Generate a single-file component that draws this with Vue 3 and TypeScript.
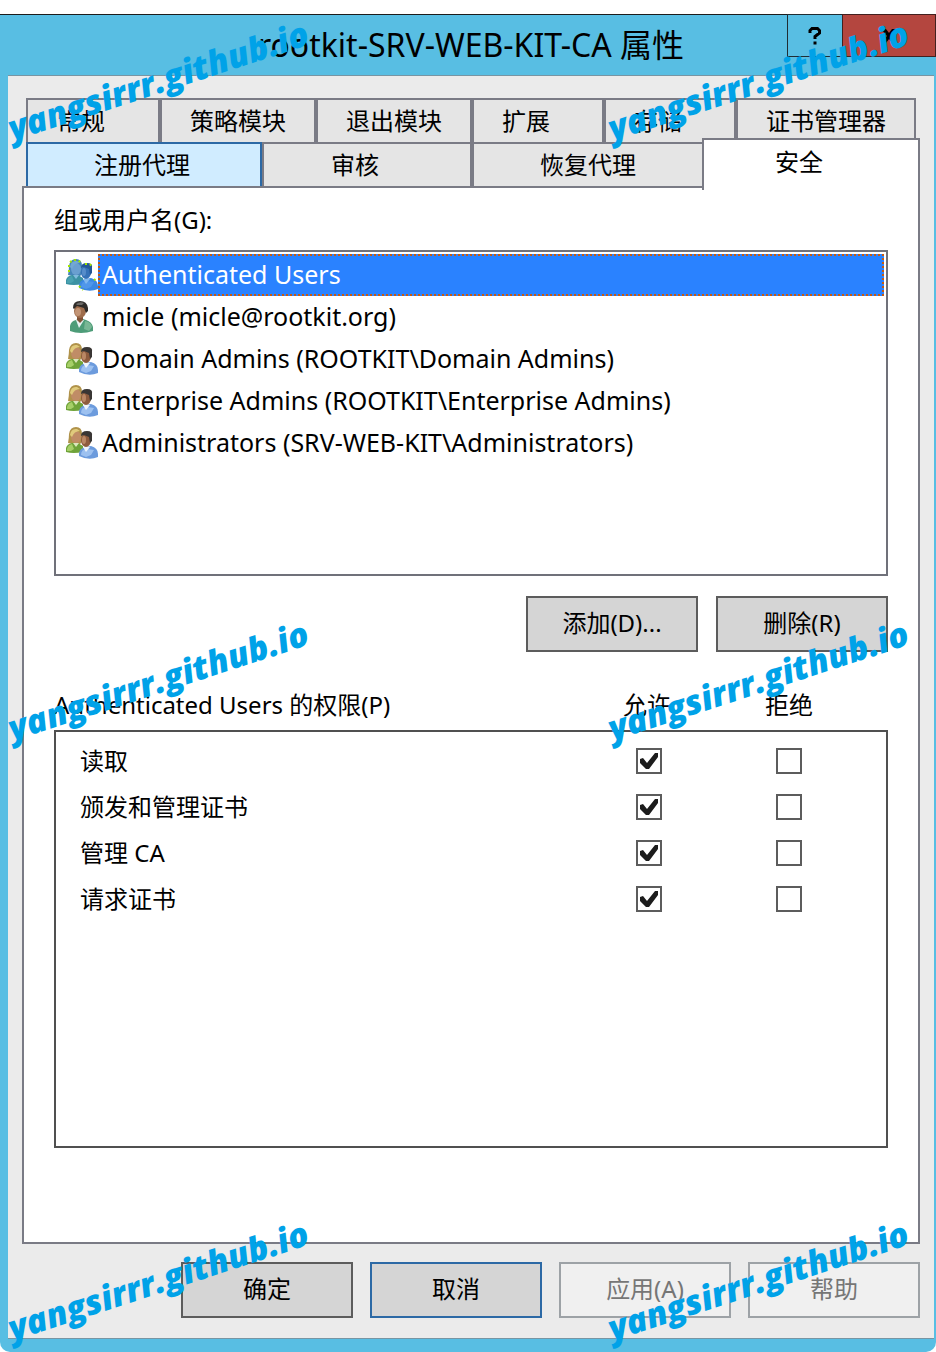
<script setup lang="ts">
import { ref } from 'vue'

interface Tab {
  label: string
  short?: boolean
  state?: 'hot' | 'active'
}

interface Principal {
  name: string
  icon: 'well-known' | 'user' | 'group'
}

interface Permission {
  id: string
  label: string
  allow: boolean
  deny: boolean
}

const tabRows: Tab[][] = [
  [
    { label: '常规', short: true },
    { label: '策略模块' },
    { label: '退出模块' },
    { label: '扩展', short: true },
    { label: '存储', short: true },
    { label: '证书管理器' },
  ],
  [
    { label: '注册代理', state: 'hot' },
    { label: '审核', short: true },
    { label: '恢复代理' },
    { label: '安全', short: true, state: 'active' },
  ],
]

const principals: Principal[] = [
  { name: 'Authenticated Users', icon: 'well-known' },
  { name: 'micle (micle@rootkit.org)', icon: 'user' },
  { name: 'Domain Admins (ROOTKIT\\Domain Admins)', icon: 'group' },
  { name: 'Enterprise Admins (ROOTKIT\\Enterprise Admins)', icon: 'group' },
  { name: 'Administrators (SRV-WEB-KIT\\Administrators)', icon: 'group' },
]

const selected = ref(0)

const permissions = ref<Permission[]>([
  { id: 'read', label: '读取', allow: true, deny: false },
  { id: 'issue', label: '颁发和管理证书', allow: true, deny: false },
  { id: 'manage', label: '管理 CA', allow: true, deny: false },
  { id: 'request', label: '请求证书', allow: true, deny: false },
])
</script>

<template>
  <div class="page">
    <section class="window" role="dialog" aria-labelledby="dialog-title">
      <header class="titlebar">
        <h1 id="dialog-title">rootkit-SRV-WEB-KIT-CA 属性</h1>
        <div class="window-buttons">
          <button type="button" class="help-button" aria-label="帮助">
            <svg width="14" height="18" viewBox="0 0 14 18" fill="none" stroke="#000" stroke-width="3">
              <path d="M2 6V3.5L4 1.5H9.5L11.5 3.5V6L7 9.500V12" />
              <path d="M7 14.500V17.500" />
            </svg>
          </button>
          <button type="button" class="close-button" aria-label="关闭">
            <svg width="16" height="14" viewBox="0 0 16 14" aria-hidden="true">
              <path d="M0 0H5L8 4L11 0H16L10 7L16 14H11L8 10L5 14H0L6 7Z" fill="#000" />
            </svg>
          </button>
        </div>
      </header>

      <div class="body">
        <div class="tabs" role="tablist">
          <div v-for="(row, r) in tabRows" :key="r" class="tab-row" :class="r === 0 ? 'back-row' : 'front-row'">
            <button
              v-for="tab in row"
              :key="tab.label"
              type="button"
              role="tab"
              :aria-selected="tab.state === 'active'"
              class="tab"
              :class="[tab.state, { short: tab.short }]"
            >{{ tab.label }}</button>
          </div>
        </div>

        <div class="pane" role="tabpanel">
          <p id="principals-label" class="caption">组或用户名(G):</p>
          <ul class="principals" role="listbox" aria-labelledby="principals-label">
            <li
              v-for="(p, i) in principals"
              :key="p.name"
              role="option"
              :aria-selected="i === selected"
              class="principal"
              @click="selected = i"
            >
              <svg v-if="p.icon === 'user'" class="icon" viewBox="0 0 32 32" aria-hidden="true">
                <path d="M4 30V25Q5 20 10 19L14 17L20 19Q26 21 27 26V30Q21 32 15 32T4 30Z" fill="#4d9c78" />
                <path d="M19 20Q25 21 26 26L23 30L18 28Z" fill="#79b795" />
                <path d="M10 19L13 27L18 19Z" fill="#e6f2f1" />
                <path d="M11 14H17V19L14 22L11 19Z" fill="#805236" />
                <ellipse cx="14" cy="10" rx="6" ry="7" fill="#9e6c4b" />
                <ellipse cx="12" cy="11" rx="3" ry="4" fill="#c39576" />
                <path d="M7 7Q7 0 14 0T22 7V10L20 12L18 7L11 5L8 8Z" fill="#2f2c29" />
                <path d="M10 3Q14 0 18 2L16 4H11Z" fill="#6c6a67" />
              </svg>
              <svg v-else class="icon" :class="p.icon" viewBox="0 0 32 32" aria-hidden="true">
                <path class="back-hair" d="M2 16Q3 11 3 7Q4 0 10 0T16 7V15L13 18Z" />
                <path class="back-body" d="M0 25V21Q1 17 6 16H12L17 19V25Q7 27 0 25Z" />
                <path class="back-light" d="M1 22Q2 18 6 17L8 22L5 24H1Z" />
                <path class="back-collar" d="M7 16L10 20L13 16Z" />
                <ellipse class="back-face" cx="10" cy="10" rx="5" ry="6" />
                <path class="back-shine" d="M4 8Q5 1 11 2L14 4Q8 4 6 10Z" />
                <path class="front-body" d="M13 29V26Q14 21 20 20L25 19Q32 21 32 27V30Q23 34 13 29Z" />
                <path class="front-light" d="M15 28Q15 22 21 22L28 23L25 28L20 30Z" />
                <path class="front-collar" d="M17 20L20 25L24 20Z" />
                <ellipse class="front-face" cx="20" cy="13" rx="5" ry="7" />
                <ellipse class="front-shine" cx="18" cy="13" rx="2" ry="4" />
                <path class="front-hair" d="M15 9Q15 4 21 4T26 9V14L24 16L23 10L18 8Z" />
                <path
                  v-if="p.icon === 'well-known'"
                  d="M3 13V5L6 1H12L15 4M19 5H24L26 8M13 27L17 31M28 20L31 23"
                  fill="none"
                  stroke="#a2e500"
                  stroke-width="2"
                  stroke-dasharray="2 3"
                />
              </svg>
              <span class="name">{{ p.name }}</span>
            </li>
          </ul>

          <div class="list-actions">
            <button type="button" class="push">添加(D)...</button>
            <button type="button" class="push">删除(R)</button>
          </div>

          <div class="permission-head">
            <span id="permissions-label" class="permission-title">Authenticated Users 的权限(P)</span>
            <span id="allow-label" class="flag-title">允许</span>
            <span id="deny-label" class="flag-title">拒绝</span>
          </div>
          <div class="permissions">
            <table aria-labelledby="permissions-label">
              <tbody>
                <tr v-for="perm in permissions" :key="perm.id">
                  <th :id="perm.id" scope="row">{{ perm.label }}</th>
                  <td><input v-model="perm.allow" type="checkbox" :aria-labelledby="`${perm.id} allow-label`" /></td>
                  <td><input v-model="perm.deny" type="checkbox" :aria-labelledby="`${perm.id} deny-label`" /></td>
                </tr>
              </tbody>
            </table>
          </div>
        </div>

        <footer class="dialog-actions">
          <button type="button" class="push">确定</button>
          <button type="button" class="push default">取消</button>
          <button type="button" class="push" disabled>应用(A)</button>
          <button type="button" class="push" disabled>帮助</button>
        </footer>
      </div>
    </section>

    <div class="watermarks" aria-hidden="true">
      <div v-for="n in 6" :key="n" class="mark-cell"><span class="mark">yangsirrr.github.io</span></div>
    </div>
  </div>
</template>

<style>
body {
  margin: 0;
  background: #fff;
}
</style>

<style scoped>
* {
  box-sizing: border-box;
}

.page {
  position: relative;
  display: flex;
  flex-direction: column;
  min-height: 100vh;
  padding-top: 14px;
  overflow: hidden;
  color: #000;
  font-family: "Noto Sans", "Noto Sans CJK SC", sans-serif;
  font-size: 24px;
  line-height: 32px;
}

button {
  padding: 0;
  font: inherit;
  color: inherit;
}

.window {
  flex: 1;
  display: flex;
  flex-direction: column;
  padding: 0 2px 13px 8px;
  background: #58bee3;
  border-top: 1px solid #1c1c1c;
  border-radius: 0 0 10px 10px;
}

.titlebar {
  position: relative;
  display: flex;
  align-items: center;
  justify-content: center;
  height: 60px;
}

h1 {
  margin: 0;
  font-size: 32px;
  font-weight: 400;
  line-height: 40px;
}

.window-buttons {
  position: absolute;
  top: -1px;
  right: -2px;
  display: flex;
}

.window-buttons button {
  display: flex;
  align-items: center;
  justify-content: center;
  height: 43px;
  border: 1px solid #1f2d33;
}

.help-button {
  width: 56px;
  background: #58bee3;
}

.window-buttons .close-button {
  width: 94px;
  margin-left: -1px;
  background: #b4463f;
  border-color: #43201f;
}

.body {
  flex: 1;
  display: flex;
  flex-direction: column;
  padding: 22px 14px 20px;
  background: #ebebeb;
  border-top: 1px solid #7895a3;
  border-bottom: 1px solid #7895a3;
}

.tabs {
  padding: 0 4px;
}

.tab-row {
  display: grid;
  height: 44px;
}

.back-row {
  grid-template-columns: 134fr 156fr 156fr 132fr 132fr 180fr;
}

.front-row {
  grid-template-columns: 236fr 210fr 232fr 212fr;
}

.tab {
  min-width: 0;
  background: #e5e5e5;
  border: 2px solid #7a7b85;
  border-bottom: 0;
  white-space: nowrap;
}

.tab.short {
  padding-right: 24px;
}

.tab.hot {
  padding-right: 4px;
  background: #d0ecff;
  border-color: #2c69a5;
}

.tab.active {
  position: relative;
  z-index: 1;
  margin: -4px -4px -4px -2px;
  padding-bottom: 6px;
  background: #fff;
}

.pane {
  flex: 1;
  padding: 16px 30px;
  background: #fff;
  border: 2px solid #7a7b85;
}

.caption {
  margin: 0 0 14px;
}

.principals {
  min-height: 326px;
  margin: 0;
  padding: 2px;
  font-size: 25px;
  list-style: none;
  border: 2px solid #70717a;
}

.principal {
  display: flex;
  align-items: center;
  height: 42px;
  padding-left: 8px;
  cursor: default;
}

.icon {
  flex: none;
  width: 32px;
  height: 32px;
}

.name {
  flex: 1;
  padding: 2px 2px 4px;
  line-height: 32px;
  border: 2px solid transparent;
  white-space: nowrap;
}

.principal[aria-selected="true"] .name {
  color: #fff;
  background: #2a82ff;
  border: 2px dotted #c65a10;
}

.list-actions {
  display: flex;
  justify-content: flex-end;
  gap: 18px;
  margin-top: 20px;
}

.push {
  width: 172px;
  height: 56px;
  padding-bottom: 2px;
  background: #d5d5d5;
  border: 2px solid #5c5c5c;
}

.push.default {
  border-color: #2c69a5;
}

.push:disabled {
  color: #767676;
  background: #f0f0f0;
  border-color: #9da2a6;
}

.permission-head {
  display: flex;
  margin-top: 37px;
  padding-right: 28px;
}

.permission-title {
  flex: 1;
}

.flag-title {
  width: 142px;
  text-align: center;
}

.permissions {
  min-height: 418px;
  margin-top: 9px;
  padding: 6px 27px 6px 24px;
  border: 2px solid #505050;
}

table {
  width: 100%;
  border-collapse: collapse;
}

th {
  padding: 0;
  font-weight: 400;
  text-align: left;
}

td {
  width: 140px;
  padding: 0;
  text-align: center;
}

tr {
  height: 46px;
}

input[type="checkbox"] {
  appearance: none;
  display: block;
  width: 26px;
  height: 26px;
  margin: 0 auto;
  background: #fff;
  border: 2px solid #5c5c5c;
}

input[type="checkbox"]:checked {
  background: #fff url("data:image/svg+xml,%3Csvg xmlns='http://www.w3.org/2000/svg' viewBox='0 0 22 22'%3E%3Cpath d='M2 9L5 8L9 13L17 3L20 3V7L11 19H8L2 13Z' fill='%231c1c1c'/%3E%3C/svg%3E") center / 22px 22px no-repeat;
}

.dialog-actions {
  display: flex;
  justify-content: flex-end;
  gap: 17px;
  margin-top: 18px;
}

.watermarks {
  position: absolute;
  inset: 0;
  display: grid;
  grid-template-columns: 600px 600px;
  grid-auto-rows: 600px;
  overflow: hidden;
  pointer-events: none;
}

.mark-cell {
  padding: 58px 0 0 1px;
}

.mark {
  display: inline-block;
  color: #00a2e8;
  font-family: "Open Sans", "Noto Sans", sans-serif;
  font-size: 34px;
  font-style: italic;
  font-weight: 800;
  line-height: 44px;
  transform: rotate(-18deg);
}

.back-body { fill: #6fa339; }
.back-light { fill: #a6cf67; }
.back-collar { fill: #dbe6bd; }
.back-hair { fill: #b0924a; }
.back-face { fill: #c08c66; }
.back-shine { fill: #e0ca7c; }
.front-body { fill: #6c9bdd; }
.front-light { fill: #9dc1f0; }
.front-collar { fill: #eef4fb; }
.front-face { fill: #8e5c3e; }
.front-shine { fill: #bb8864; }
.front-hair { fill: #393634; }

.well-known .back-body { fill: #3c92a3; }
.well-known .back-light { fill: #4aa2b1; }
.well-known .back-collar { fill: #81bbdd; }
.well-known .back-hair { fill: #4785b8; }
.well-known .back-face { fill: #6a9fd0; }
.well-known .back-shine { fill: #73a8d2; }
.well-known .front-body { fill: #3b88e2; }
.well-known .front-light { fill: #5097ea; }
.well-known .front-collar { fill: #80b8ee; }
.well-known .front-face { fill: #3572b7; }
.well-known .front-shine { fill: #568dca; }
.well-known .front-hair { fill: #245796; }
</style>
